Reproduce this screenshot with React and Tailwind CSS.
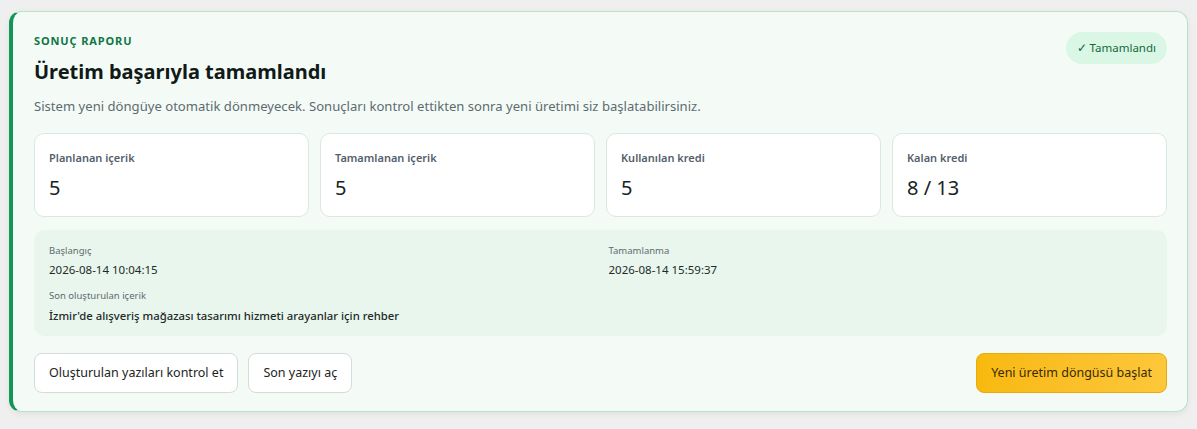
import React from 'react';

const stats = [
  { label: 'Planlanan içerik', value: '5' },
  { label: 'Tamamlanan içerik', value: '5' },
  { label: 'Kullanılan kredi', value: '5' },
  { label: 'Kalan kredi', value: '8 / 13' },
];

const App = () => {
  return (
    <div
      className="min-h-[429px] bg-[#efefef] px-[9px] pt-[11px] pb-4"
      style={{ fontFamily: '"Noto Sans", "Open Sans", sans-serif' }}
    >
      <div className="rounded-[12px] border border-[#b9e1cd] border-l-[4px] border-l-[#129556] bg-[#f4fbf7] pl-[21px] pr-[20px] pt-[22px] pb-[18px] shadow-[0_2px_6px_rgba(0,0,0,0.06)]">
        {/* header */}
        <div className="flex items-start justify-between">
          <div>
            <div className="text-[11px] font-bold tracking-[0.08em] leading-[14px] text-[#0f7645]">
              SONUÇ RAPORU
            </div>
            <h2 className="mt-[9px] text-[20px] font-bold leading-[30px] text-[#111a17]">
              Üretim başarıyla tamamlandı
            </h2>
            <p className="mt-[9px] text-[13.1px] leading-[20px] text-[#5d6b70]">
              Sistem yeni döngüye otomatik dönmeyecek. Sonuçları kontrol ettikten sonra yeni üretimi siz başlatabilirsiniz.
            </p>
          </div>
          <span className="mt-[-2px] rounded-full bg-[#daf7e5] px-[11px] py-[7px] text-[11.5px] leading-[18px] text-[#146a40]">
            ✓ Tamamlandı
          </span>
        </div>

        {/* stat cards */}
        <div className="mt-[17px] grid grid-cols-4 gap-[11px]">
          {stats.map((s) => (
            <div
              key={s.label}
              className="h-[84px] rounded-[10px] border border-[#dae8e1] bg-white px-[14px] pt-[16px]"
            >
              <div className="text-[11px] font-semibold leading-[16px] text-[#555f6d]">{s.label}</div>
              <div className="mt-[9px] text-[20px] leading-[26px] text-[#17231f]">{s.value}</div>
            </div>
          ))}
        </div>

        {/* timing details */}
        <div className="mt-[13px] rounded-[10px] bg-[#e8f6ee] px-[15px] pt-[14px] pb-[12px]">
          <div className="grid grid-cols-2 gap-[12px]">
            <div>
              <div className="text-[9.5px] leading-[14px] text-[#5f6a6e]">Başlangıç</div>
              <div className="mt-[4px] text-[11.5px] leading-[16px] text-[#1f2a27]">2026-08-14 10:04:15</div>
            </div>
            <div className="pl-[2px]">
              <div className="text-[9.5px] leading-[14px] text-[#5f6a6e]">Tamamlanma</div>
              <div className="mt-[4px] text-[11.5px] leading-[16px] text-[#1f2a27]">2026-08-14 15:59:37</div>
            </div>
          </div>
          <div className="mt-[11px] text-[9.5px] leading-[14px] text-[#5f6a6e]">Son oluşturulan içerik</div>
          <div className="mt-[5px] text-[11.3px] font-medium leading-[16px] text-[#1f2a27]">
            İzmir'de alışveriş mağazası tasarımı hizmeti arayanlar için rehber
          </div>
        </div>

        {/* actions */}
        <div className="mt-[17px] flex items-center justify-between">
          <div className="flex gap-[10px]">
            <button className="h-[40px] rounded-[8px] border border-[#d3dcd8] bg-white px-[14px] text-[12.5px] text-[#1e2422]">
              Oluşturulan yazıları kontrol et
            </button>
            <button className="h-[40px] rounded-[8px] border border-[#d3dcd8] bg-white px-[14px] text-[12.5px] text-[#1e2422]">
              Son yazıyı aç
            </button>
          </div>
          <button className="h-[40px] rounded-[8px] border border-[#e7ab0c] bg-gradient-to-r from-[#f8b90d] to-[#fdc73a] px-[14px] text-[12.5px] text-[#3a2a05]">
            Yeni üretim döngüsü başlat
          </button>
        </div>
      </div>
    </div>
  );
};

export default App;
